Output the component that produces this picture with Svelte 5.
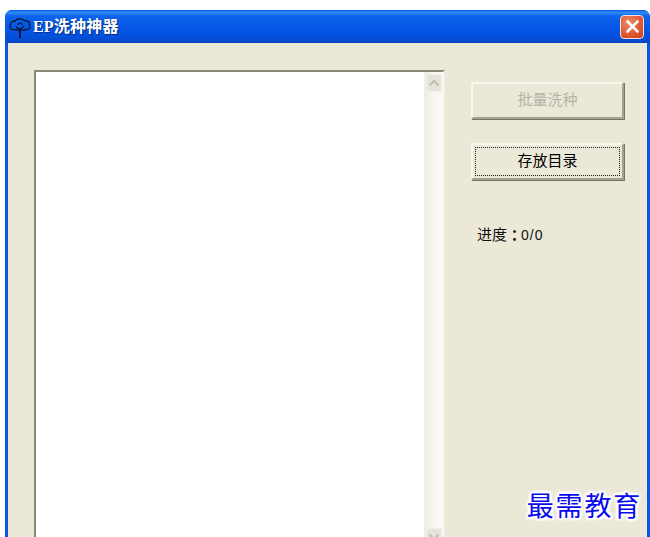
<script>
  const title = 'EP洗种神器';
</script>

<div class="page">
  <div class="window">
    <header class="titlebar">
      <svg class="app-icon" width="22" height="22" viewBox="0 0 22 22" fill="none" stroke="#0a1228" stroke-width="1.2">
        <path d="M11 21V11" stroke-width="1.800"/>
        <path d="M11 14 7 9.500M11 13l4-4M9 8a2 2 0 0 1 2-2 2 2 0 0 1 2 2"/>
        <path d="M6 12.500C2 13.500 0 10.500 1.500 8 1 5.500 3.500 3.500 6 4.500 7 1 14 1 15.500 4c3-1 5.500 1 5 4 1.500 2.500-.5 5-4.500 4.500-1 1-2.500 1-3.500 0M6 12.500c1 1 3 1 4-.5"/>
      </svg>
      <span class="title">{title}</span>
      <button class="close" aria-label="关闭">
        <svg width="15" height="15" viewBox="0 0 15 15"><path d="M2.500 2.500 12.500 12.500M12.500 2.500 2.500 12.500" stroke="#fff" stroke-width="2.600" stroke-linecap="round"/></svg>
      </button>
    </header>
    <main class="client">
      <section class="list">
        <div class="list-body"></div>
        <div class="scrollbar">
          <div class="sb-btn"><svg width="12" height="8" viewBox="0 0 12 8"><path d="M1.500 6.500 6 2 10.500 6.500" fill="none" stroke="#c0c0b4" stroke-width="2.200"/></svg></div>
          <div class="sb-track"></div>
          <div class="sb-btn"><svg width="12" height="8" viewBox="0 0 12 8"><path d="M1.500 1.500 6 6 10.500 1.500" fill="none" stroke="#c0c0b4" stroke-width="2.200"/></svg></div>
        </div>
      </section>
      <aside class="side">
        <button class="btn disabled" disabled>批量洗种</button>
        <button class="btn focused"><span>存放目录</span></button>
        <p class="progress">进度<span class="colon">：</span><span class="count">0/0</span></p>
      </aside>
    </main>
  </div>
  <div class="watermark">最需教育</div>
</div>

<style>
  :global(body) {
    margin: 0;
    background: #fff;
  }
  .page {
    position: relative;
    width: 650px;
    height: 537px;
    overflow: hidden;
    padding: 10px 0 0 5px;
    box-sizing: border-box;
    font-family: "Liberation Sans", "Noto Sans CJK SC", sans-serif;
  }
  .window {
    height: 560px;
    display: flex;
    flex-direction: column;
    border-radius: 7px 7px 0 0;
    background: #0a55e4;
    padding: 0 3px;
  }
  .titlebar {
    height: 33px;
    margin: 0 -3px;
    flex: none;
    display: flex;
    align-items: center;
    padding: 0 6px 0 4px;
    border-radius: 7px 7px 0 0;
    background: linear-gradient(180deg, #0a5ae0 0%, #2f8cf5 8%, #0f63ea 18%, #0558e6 50%, #0450dd 80%, #0546c4 100%);
  }
  .app-icon {
    flex: none;
    margin: 2px 2px 0 0;
  }
  .title {
    color: #fff;
    font-family: "Liberation Serif", "Noto Sans CJK SC", serif;
    font-weight: 700;
    font-size: 16px;
    line-height: 20px;
    letter-spacing: 0.2px;
    text-shadow: 1px 1px 1px #0a2a80;
  }
  .close {
    margin-left: auto;
    width: 24px;
    height: 24px;
    padding: 0;
    display: flex;
    align-items: center;
    justify-content: center;
    border: 1px solid #f3e0d8;
    border-radius: 4px;
    background: radial-gradient(circle at 35% 30%, #ec8a68, #e0572f 60%, #c93c18);
  }
  .client {
    flex: 1;
    display: flex;
    align-items: flex-start;
    background: #ebe8d8;
    padding: 27px 0 0 26px;
    min-height: 0;
  }
  .list {
    flex: none;
    width: 411px;
    height: 478px;
    box-sizing: border-box;
    display: flex;
    background: #fff;
    border: 2px solid;
    border-color: #8a8778 #f4f2e8 #f4f2e8 #8a8778;
  }
  .list-body {
    flex: 1;
  }
  .scrollbar {
    width: 19px;
    display: flex;
    flex-direction: column;
    background: linear-gradient(90deg, #efeee5, #f6f5ef 50%, #fbfbf8);
  }
  .sb-btn {
    height: 18px;
    margin: 2px 1px 0 2px;
    flex: none;
    display: flex;
    align-items: center;
    justify-content: center;
    box-sizing: border-box;
    border: 1px solid #f0efe8;
    border-radius: 2px;
    background: #e6e4da;
  }
  .sb-track {
    flex: 1;
  }
  .side {
    flex: none;
    width: 153px;
    margin: 12px 0 0 26px;
    display: flex;
    flex-direction: column;
  }
  .btn {
    width: 153px;
    height: 37px;
    padding: 0 0 5px;
    box-sizing: border-box;
    background: #ebe8d8;
    color: #000;
    font: 15px "Noto Sans CJK SC", sans-serif;
    border: 2px solid;
    border-color: #f8f7ef #a5a290 #a5a290 #f8f7ef;
    box-shadow: 1px 1px 0 #77745f;
  }
  .btn.disabled {
    color: #b5b3a8;
  }
  .focused {
    margin-top: 24px;
    padding: 2px;
  }
  .focused span {
    display: flex;
    align-items: center;
    justify-content: center;
    height: 100%;
    box-sizing: border-box;
    border: 1px dotted #222;
    padding-bottom: 4px;
  }
  .progress {
    margin: 44px 0 0 6px;
    font: 15px/20px "Noto Sans CJK SC", sans-serif;
    color: #111;
  }
  .colon {
    font-family: "Noto Sans CJK TC", sans-serif;
    font-weight: 700;
    vertical-align: -1px;
    line-height: 0;
  }
  .count {
    font: 14px "Liberation Sans", sans-serif;
    letter-spacing: 1px;
    margin-left: -1px;
  }
  .watermark {
    position: absolute;
    right: 8px;
    top: 486px;
    color: #0a0aee;
    font: 400 27px/38px "Noto Sans CJK SC", serif;
    letter-spacing: 1.800px;
    text-shadow: 0 0 2px #fff, 0 0 2px #fff, 1px 1px 2px #fff, -1px -1px 2px #fff, 2px 0 2px #fff, -2px 0 2px #fff, 0 2px 2px #fff, 0 -2px 2px #fff, 2px 2px 2px #fff, -2px -2px 2px #fff, 2px -2px 2px #fff, -2px 2px 2px #fff;
  }
</style>
